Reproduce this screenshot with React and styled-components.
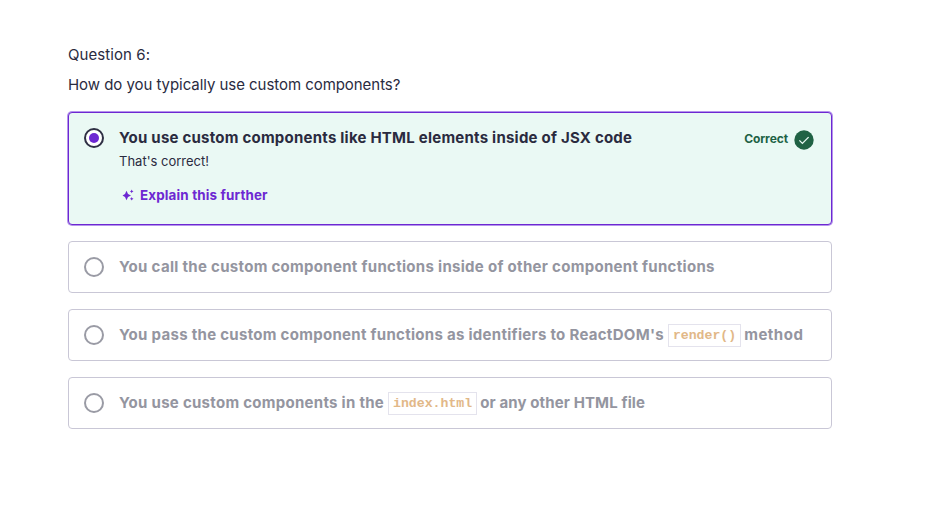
import React from "react";
import styled, { createGlobalStyle } from "styled-components";

const GlobalStyle = createGlobalStyle`
  * { box-sizing: border-box; }
  body {
    margin: 0;
    background: #fff;
    color: #2a2b3f;
    font-family: Inter, "Liberation Sans", sans-serif;
  }
`;

const Quiz = styled.main`
  width: 764px;
  margin: 44px 0 0 68px;
`;

const Prompt = styled.p`
  margin: 0 0 8px;
  font-size: 15px;
  line-height: 22px;
  letter-spacing: ${(p) => p.$tracking || "0"};
  white-space: nowrap;
`;

const Answers = styled.ul`
  display: flex;
  flex-direction: column;
  gap: 16px;
  list-style: none;
  margin: 16px 0 0;
  padding: 0;
`;

const Answer = styled.li`
  display: flex;
  align-items: flex-start;
  height: ${(p) => (p.$correct ? "113px" : "52px")};
  padding: 15px;
  border: 1px solid ${(p) => (p.$correct ? "#6d28d2" : "#c9c7d6")};
  border-radius: 4px;
  background: ${(p) => (p.$correct ? "#eaf9f4" : "#fff")};
  box-shadow: ${(p) => (p.$correct ? "0 0 0 1px #b594ec" : "none")};
  color: ${(p) => (p.$correct ? "#2a2b3f" : "#9495a0")};
`;

const Radio = styled.span`
  display: grid;
  place-items: center;
  flex: none;
  width: 20px;
  height: 20px;
  margin-right: 15px;
  border: 2px solid ${(p) => (p.$checked ? "#2f3044" : "#9a9ba5")};
  border-radius: 50%;
  background: #fff;
  &::after {
    content: "";
    width: 10px;
    height: 10px;
    border-radius: 50%;
    background: ${(p) => (p.$checked ? "#6d28d2" : "transparent")};
  }
`;

const Body = styled.div`
  flex: 1;
  min-width: 0;
`;

const Label = styled.div`
  display: flex;
  align-items: center;
  height: 20px;
  font-size: 15px;
  font-weight: 700;
  line-height: 20px;
  white-space: nowrap;
`;

const Text = styled.span`
  letter-spacing: ${(p) => p.$tracking || "0.28px"};
`;

const Code = styled.code`
  height: 23px;
  margin: 0 3px 0 4px;
  padding: 0 4px;
  border: 1px solid #e4e3ed;
  color: #e2b888;
  font: 700 13.2px/22px "Liberation Mono", monospace;
`;

const Feedback = styled.p`
  margin: 4px 0 0;
  font-size: 13px;
  line-height: 19px;
`;

const Explain = styled.button`
  display: flex;
  align-items: center;
  gap: 5px;
  margin: 14px 0 0 3px;
  padding: 0;
  border: 0;
  background: none;
  color: #6d28d2;
  font: 700 13.4px/20px Inter, "Liberation Sans", sans-serif;
  letter-spacing: 0.16px;
`;

const Status = styled.div`
  display: flex;
  align-items: flex-start;
  gap: 6px;
  margin: 2px 2px 0 0;
  color: #206244;
  font-size: 12px;
  font-weight: 700;
  line-height: 18px;
  letter-spacing: -0.08px;
`;

const Sparkle = () => (
  <svg width="13" height="12" viewBox="0 0 13 12" fill="currentColor">
    <path d="M4.5 1.8 6 5 9 6.5 6 8 4.5 11.2 3 8 .5 6.5 3 5Z" />
    <path d="m9.7.6.6 1.2 1.2.6-1.2.6-.6 1.2-.6-1.2-1.2-.6 1.2-.6Z" />
    <path d="m9.7 8 .6 1.2 1.2.6-1.2.6-.6 1.2-.6-1.2-1.2-.6 1.2-.6Z" />
  </svg>
);

const Check = () => (
  <svg width="20" height="20" viewBox="0 0 20 20">
    <circle cx="10" cy="10" r="9.7" fill="#206244" />
    <path d="m5.4 10.4 3 3 6.2-6.3" fill="none" stroke="#eaf9f4" strokeWidth="1.3" />
  </svg>
);

export default function App() {
  return (
    <>
      <GlobalStyle />
      <Quiz>
        <Prompt $tracking="0.08px">Question 6:</Prompt>
        <Prompt $tracking="-0.05px">How do you typically use custom components?</Prompt>
        <Answers>
          <Answer $correct>
            <Radio $checked />
            <Body>
              <Label>
                <Text $tracking="0.23px">You use custom components like HTML elements inside of JSX code</Text>
              </Label>
              <Feedback>That's correct!</Feedback>
              <Explain><Sparkle />Explain this further</Explain>
            </Body>
            <Status><span>Correct</span><Check /></Status>
          </Answer>
          <Answer>
            <Radio />
            <Label>
              <Text $tracking="0.3px">You call the custom component functions inside of other component functions</Text>
            </Label>
          </Answer>
          <Answer>
            <Radio />
            <Label>
              <Text $tracking="0.29px">You pass the custom component functions as identifiers to ReactDOM's</Text>
              <Code>render()</Code>
              <Text $tracking="0.5px">method</Text>
            </Label>
          </Answer>
          <Answer>
            <Radio />
            <Label>
              <Text>You use custom components in the</Text>
              <Code>index.html</Code>
              <Text $tracking="0.12px">or any other HTML file</Text>
            </Label>
          </Answer>
        </Answers>
      </Quiz>
    </>
  );
}
